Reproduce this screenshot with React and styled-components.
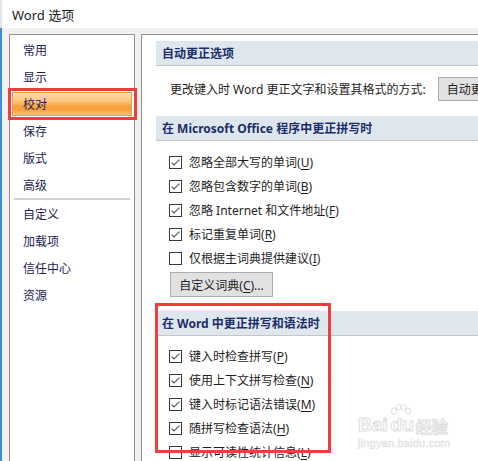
import React from "react";
import styled, { createGlobalStyle } from "styled-components";

const GlobalStyle = createGlobalStyle`
  html, body { margin: 0; padding: 0; overflow: hidden; background: #ffffff; }
  body { font-family: "Noto Sans", "Noto Sans CJK SC", sans-serif; }
  * { box-sizing: border-box; }
`;

const Window = styled.div`
  position: relative;
  width: 478px;
  height: 461px;
  overflow: hidden;
  display: flex;
  flex-direction: column;
  background: #ffffff;
`;

const TitleBar = styled.div`
  height: 28px;
  flex: none;
  display: flex;
  align-items: center;
  padding-left: 12px;
  border-left: 2px solid #e4e6e8;
  font-size: 13px;
  color: #1a1a1a;
  background: #ffffff;
`;

const TitleText = styled.span`
  margin-left: -2px;
`;

const Body = styled.div`
  flex: 1;
  min-height: 0;
  display: flex;
  gap: 6px;
  padding: 6px 0 0 7px;
  border-left: 2px solid #3d8ddd;
  background: #f0f0f0;
`;

const Sidebar = styled.nav`
  flex: none;
  width: 126px;
  height: 500px;
  background: #ffffff;
  border: 1px solid #8e9099;
  padding-top: 1px;
  display: flex;
  flex-direction: column;
`;

const NavItem = styled.div`
  height: 27px;
  padding: 2px 2px 1px;
  display: flex;
`;

const NavLabel = styled.div`
  position: relative;
  flex: 1;
  display: flex;
  align-items: center;
  padding-left: ${(p) => (p.$active ? "10px" : "11px")};
  font-size: 12px;
  color: #1d1d52;
  border: ${(p) => (p.$active ? "1px solid #d9a152" : "none")};
  background: ${(p) =>
    p.$active
      ? "linear-gradient(to bottom, #fddca8 0%, #fcc47a 38%, #f9a03c 62%, #f8a344 80%, #fcc07a 100%)"
      : "transparent"};
`;

const Annotation = styled.div`
  position: absolute;
  border: 3px solid #f23d3d;
  pointer-events: none;
`;

const NavMark = styled(Annotation)`
  top: -5px;
  left: -5px;
  right: -6px;
  bottom: -5px;
`;

const NavSeparator = styled.div`
  height: 2px;
  margin: 0 4px;
  background: #cbd0d4;
`;

const Content = styled.main`
  position: relative;
  flex: none;
  width: 600px;
  height: 500px;
  background: #ffffff;
  border-left: 1px solid #8e9099;
  border-top: 1px solid #8e9099;
  padding: 6px 0 0 14px;
  display: flex;
  flex-direction: column;
`;

const Section = styled.section`
  position: relative;
  display: flex;
  flex-direction: column;
  margin-top: ${(p) => p.$gap || 0}px;
`;

const SectionHeader = styled.div`
  height: 25px;
  display: flex;
  align-items: center;
  padding-left: 6px;
  background: #dfe7ee;
  border-bottom: 1px solid #c3c7cc;
  font-size: 12px;
  font-weight: 700;
  color: #1b2d6a;
  white-space: nowrap;
`;

const DescRow = styled.div`
  margin-top: 11px;
  padding-left: 14px;
  height: 24px;
  display: flex;
  align-items: center;
  gap: 12px;
  font-size: 12px;
  color: #1e1e1e;
  white-space: nowrap;
`;

const Button = styled.div`
  height: ${(p) => p.$h || 24}px;
  width: ${(p) => (p.$w ? p.$w + "px" : "auto")};
  display: flex;
  align-items: center;
  justify-content: center;
  padding: 0 8px;
  background: #e1e1e1;
  border: 1px solid #adadad;
  font-size: 12px;
  color: #1e1e1e;
  white-space: nowrap;
`;

const CheckList = styled.div`
  display: flex;
  flex-direction: column;
  padding-top: ${(p) => p.$pad}px;
  padding-left: 13px;
`;

const CheckRow = styled.div`
  height: 24px;
  display: flex;
  align-items: center;
  gap: 7px;
  font-size: 12px;
  color: #1e1e1e;
  white-space: nowrap;
`;

const Key = styled.span`
  text-decoration: underline;
  text-underline-offset: 2px;
`;

const ButtonRow = styled.div`
  margin-top: 2px;
  padding-left: 14px;
  display: flex;
`;

const SectionMark = styled(Annotation)`
  top: -8px;
  left: -1px;
  width: 176px;
  height: 150px;
`;

const Watermark = styled.div`
  position: absolute;
  left: 358px;
  top: 402px;
  display: flex;
  flex-direction: column;
  align-items: flex-start;
  pointer-events: none;
  color: #ffffff;
`;

const WmLogo = styled.div`
  position: relative;
  display: flex;
  align-items: flex-end;
  height: 32px;
  font-family: "Liberation Sans", sans-serif;
  font-weight: 700;
  font-size: 19px;
  line-height: 1;
  -webkit-text-stroke: 1px #dedede;
`;

const WmCn = styled.span`
  font-family: "Noto Sans CJK SC", sans-serif;
  font-size: 16px;
  margin-left: 2px;
`;

const WmPaw = styled.svg`
  position: absolute;
  left: 31px;
  top: 2px;
`;

const WmUrl = styled.div`
  margin-top: 3px;
  font-family: "Liberation Sans", sans-serif;
  font-size: 11px;
  letter-spacing: 0.2px;
  -webkit-text-stroke: 0.6px #e0e0e0;
`;

const CheckBox = ({ checked }) => (
  <svg width="13" height="13" viewBox="0 0 13 13" style={{ flex: "none" }}>
    <rect x="0.5" y="0.5" width="12" height="12" fill="#ffffff" stroke="#3a3a3a" />
    {checked && (
      <polyline
        points="2.6,6.6 5,9 10.4,3.6"
        fill="none"
        stroke="#5a5a5a"
        strokeWidth="1.2"
      />
    )}
  </svg>
);

const Label = ({ text, k, tail = "" }) => (
  <span>
    {text}(<Key>{k}</Key>){tail}
  </span>
);

const navTop = ["常用", "显示", "校对", "保存", "版式", "高级"];
const navBottom = ["自定义", "加载项", "信任中心", "资源"];

const officeChecks = [
  { t: "忽略全部大写的单词", k: "U", c: true },
  { t: "忽略包含数字的单词", k: "B", c: true },
  { t: "忽略 Internet 和文件地址", k: "F", c: true },
  { t: "标记重复单词", k: "R", c: true },
  { t: "仅根据主词典提供建议", k: "I", c: false },
];

const wordChecks = [
  { t: "键入时检查拼写", k: "P", c: true },
  { t: "使用上下文拼写检查", k: "N", c: true },
  { t: "键入时标记语法错误", k: "M", c: true },
  { t: "随拼写检查语法", k: "H", c: true },
  { t: "显示可读性统计信息", k: "L", c: false },
];

export default function App() {
  return (
    <>
      <GlobalStyle />
      <Window>
        <TitleBar>
          <TitleText>Word 选项</TitleText>
        </TitleBar>
        <Body>
          <Sidebar>
            {navTop.map((n) => (
              <NavItem key={n}>
                <NavLabel $active={n === "校对"}>
                  {n}
                  {n === "校对" && <NavMark />}
                </NavLabel>
              </NavItem>
            ))}
            <NavSeparator />
            {navBottom.map((n) => (
              <NavItem key={n}>
                <NavLabel>{n}</NavLabel>
              </NavItem>
            ))}
          </Sidebar>
          <Content>
            <Section>
              <SectionHeader>自动更正选项</SectionHeader>
              <DescRow>
                <span>更改键入时 Word 更正文字和设置其格式的方式:</span>
                <Button>
                  <Label text="自动更正选项" k="A" tail="..." />
                </Button>
              </DescRow>
            </Section>
            <Section $gap={15}>
              <SectionHeader>在 Microsoft Office 程序中更正拼写时</SectionHeader>
              <CheckList $pad={9}>
                {officeChecks.map((c) => (
                  <CheckRow key={c.k}>
                    <CheckBox checked={c.c} />
                    <Label text={c.t} k={c.k} />
                  </CheckRow>
                ))}
              </CheckList>
              <ButtonRow>
                <Button $w={103} $h={25}>
                  <Label text="自定义词典" k="C" tail="..." />
                </Button>
              </ButtonRow>
            </Section>
            <Section $gap={14}>
              <SectionHeader>在 Word 中更正拼写和语法时</SectionHeader>
              <CheckList $pad={8}>
                {wordChecks.map((c) => (
                  <CheckRow key={c.k}>
                    <CheckBox checked={c.c} />
                    <Label text={c.t} k={c.k} />
                  </CheckRow>
                ))}
              </CheckList>
              <SectionMark />
            </Section>
          </Content>
        </Body>
        <Watermark>
          <WmLogo>
            <span>Bai</span>
            <span style={{ marginLeft: 3 }}>du</span>
            <WmCn>经验</WmCn>
            <WmPaw width="24" height="18" viewBox="0 0 24 18">
              <g fill="#ffffff" stroke="#dedede" strokeWidth="1">
                <ellipse cx="5" cy="7" rx="2.6" ry="3.2" />
                <ellipse cx="9.5" cy="3.2" rx="2.4" ry="2.8" />
                <ellipse cx="14.5" cy="3.2" rx="2.4" ry="2.8" />
                <ellipse cx="19" cy="7" rx="2.6" ry="3.2" />
              </g>
            </WmPaw>
          </WmLogo>
          <WmUrl>jingyan.baidu.com</WmUrl>
        </Watermark>
      </Window>
    </>
  );
}
